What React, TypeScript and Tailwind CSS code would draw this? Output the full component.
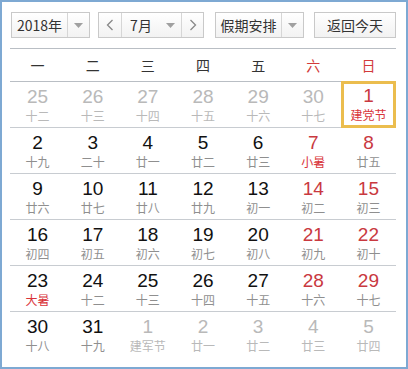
import React from "react";

type Cell = { d: string; l: string; kind: "gray" | "normal" | "red"; lred?: boolean; lgray?: boolean; sel?: boolean };

const rows: Cell[][] = [
  [
    { d: "25", l: "十二", kind: "gray" },
    { d: "26", l: "十三", kind: "gray" },
    { d: "27", l: "十四", kind: "gray" },
    { d: "28", l: "十五", kind: "gray" },
    { d: "29", l: "十六", kind: "gray" },
    { d: "30", l: "十七", kind: "gray" },
    { d: "1", l: "建党节", kind: "red", lred: true, sel: true },
  ],
  [
    { d: "2", l: "十九", kind: "normal" },
    { d: "3", l: "二十", kind: "normal" },
    { d: "4", l: "廿一", kind: "normal" },
    { d: "5", l: "廿二", kind: "normal" },
    { d: "6", l: "廿三", kind: "normal" },
    { d: "7", l: "小暑", kind: "red", lred: true },
    { d: "8", l: "廿五", kind: "red" },
  ],
  [
    { d: "9", l: "廿六", kind: "normal" },
    { d: "10", l: "廿七", kind: "normal" },
    { d: "11", l: "廿八", kind: "normal" },
    { d: "12", l: "廿九", kind: "normal" },
    { d: "13", l: "初一", kind: "normal" },
    { d: "14", l: "初二", kind: "red" },
    { d: "15", l: "初三", kind: "red" },
  ],
  [
    { d: "16", l: "初四", kind: "normal" },
    { d: "17", l: "初五", kind: "normal" },
    { d: "18", l: "初六", kind: "normal" },
    { d: "19", l: "初七", kind: "normal" },
    { d: "20", l: "初八", kind: "normal" },
    { d: "21", l: "初九", kind: "red" },
    { d: "22", l: "初十", kind: "red" },
  ],
  [
    { d: "23", l: "大暑", kind: "normal", lred: true },
    { d: "24", l: "十二", kind: "normal" },
    { d: "25", l: "十三", kind: "normal" },
    { d: "26", l: "十四", kind: "normal" },
    { d: "27", l: "十五", kind: "normal" },
    { d: "28", l: "十六", kind: "red" },
    { d: "29", l: "十七", kind: "red" },
  ],
  [
    { d: "30", l: "十八", kind: "normal" },
    { d: "31", l: "十九", kind: "normal" },
    { d: "1", l: "建军节", kind: "gray" },
    { d: "2", l: "廿一", kind: "gray" },
    { d: "3", l: "廿二", kind: "gray" },
    { d: "4", l: "廿三", kind: "gray" },
    { d: "5", l: "廿四", kind: "gray" },
  ],
];

const Caret = () => (
  <svg width="9" height="5" viewBox="0 0 9 5">
    <path d="M0 0 L9 0 L4.5 5 Z" fill="#a0a0a0" />
  </svg>
);

const Chevron = ({ dir }: { dir: "l" | "r" }) => (
  <svg width="8" height="12" viewBox="0 0 8 12">
    <path
      d={dir === "l" ? "M6.5 1 L1.5 6 L6.5 11" : "M1.5 1 L6.5 6 L1.5 11"}
      stroke="#888"
      strokeWidth="1.3"
      fill="none"
    />
  </svg>
);

const btn = "h-[26px] border border-[#c9c9c9] bg-gradient-to-b from-white to-[#f2f2f2] flex items-center text-[14px] text-[#333]";

export default function App() {
  const cjk = { fontFamily: '"Noto Sans CJK SC", "Liberation Sans", sans-serif' };
  return (
    <div className="w-[408px] h-[369px] bg-white border-2 border-[#7ea9d3] box-border" style={cjk}>
      <div className="pl-[8px] pr-[10px] pt-[10px]">
        <div className="flex items-center h-[26px] pl-[1px]">
          <div className={`${btn} w-[79px]`}>
            <span className="w-[55px] text-center leading-none">2018年</span>
            <span className="w-px h-full bg-[#d6d6d6]" />
            <span className="flex-1 flex justify-center"><Caret /></span>
          </div>
          <div className={`${btn} w-[106px] ml-[8px]`}>
            <span className="w-[22px] h-full flex items-center justify-center"><Chevron dir="l" /></span>
            <span className="w-px h-full bg-[#d6d6d6]" />
            <span className="w-[59px] flex items-center h-full">
              <span className="w-[38px] text-center leading-none">7月</span>
              <span className="flex-1 flex justify-center"><Caret /></span>
            </span>
            <span className="w-px h-full bg-[#d6d6d6]" />
            <span className="flex-1 h-full flex items-center justify-center"><Chevron dir="r" /></span>
          </div>
          <div className={`${btn} w-[89px] ml-[11px]`}>
            <span className="w-[65px] text-center leading-none">假期安排</span>
            <span className="w-px h-full bg-[#d6d6d6]" />
            <span className="flex-1 flex justify-center"><Caret /></span>
          </div>
          <div className={`${btn} w-[82px] ml-[10px] justify-center`}>
            <span className="leading-none">返回今天</span>
          </div>
        </div>
        <div className="mt-[10px] border-t border-[#b9bec4] h-[34px] grid grid-cols-7 items-center border-b">
          {["一", "二", "三", "四", "五", "六", "日"].map((w, i) => (
            <div key={w} className={`text-center text-[14px] ${i >= 5 ? "text-[#d23a3a]" : "text-[#333]"}`}>
              {w}
            </div>
          ))}
        </div>
        {rows.map((r, ri) => (
          <div key={ri} className={`grid grid-cols-7 h-[46px] ${ri < 5 ? "border-b border-[#c8ccd1]" : ""}`}>
            {r.map((c, ci) => (
              <div
                key={ci}
                className={`flex flex-col items-center ${c.sel ? "border-[3px] border-[#ebbd4e] -mt-px h-[47px] pt-[1px]" : "pt-[4px]"}`}
              >
                <div
                  className={`text-[19px] leading-[22px] ${
                    c.kind === "gray" ? "text-[#b9b9b9]" : c.kind === "red" ? "text-[#c9393f]" : "text-[#111]"
                  }`}
                  style={{ fontFamily: '"Liberation Sans", Arial, sans-serif' }}
                >
                  {c.d}
                </div>
                <div
                  className={`text-[12px] leading-[16px] ${
                    c.lred ? "text-[#d9343a]" : c.kind === "gray" ? "text-[#b9b9b9]" : "text-[#8f8f8f]"
                  }`}
                >
                  {c.l}
                </div>
              </div>
            ))}
          </div>
        ))}
      </div>
    </div>
  );
}
